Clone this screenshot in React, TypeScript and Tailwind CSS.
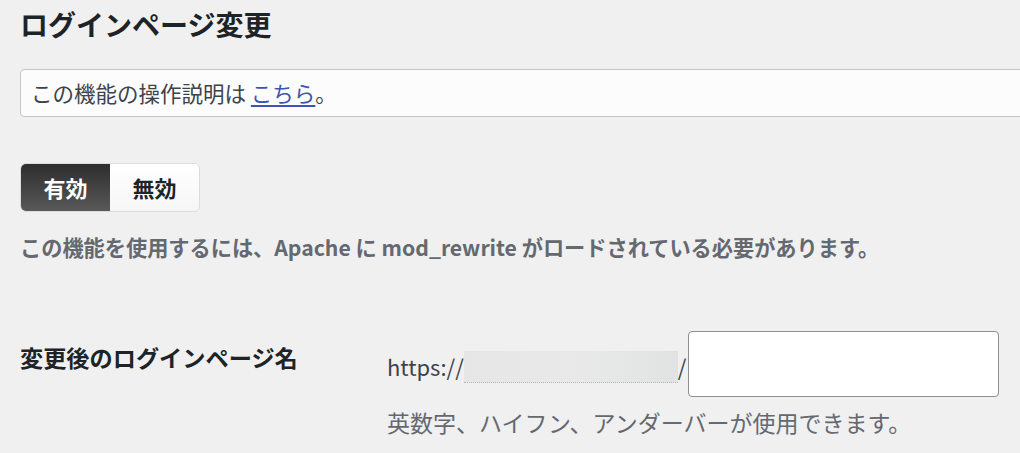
import { useState } from "react";

// 有効 / 無効 の切り替えボタン
function Toggle() {
  const [enabled, setEnabled] = useState(true);
  const on = "bg-gradient-to-b from-[#2e2e2e] to-[#595959] text-white";
  const off = "bg-gradient-to-b from-white to-[#f6f6f6] text-[#1d2327]";
  return (
    <div className="mt-[46px] inline-flex h-[49px] rounded-[6px] border border-[#dcdcde] overflow-hidden">
      <button
        onClick={() => setEnabled(true)}
        className={`w-[89px] text-[22px] font-bold ${enabled ? on : off}`}
      >
        有効
      </button>
      <button
        onClick={() => setEnabled(false)}
        className={`w-[89px] text-[22px] font-bold ${!enabled ? on : off}`}
      >
        無効
      </button>
    </div>
  );
}

export default function App() {
  const [slug, setSlug] = useState("");

  return (
    <div
      className="min-h-[453px] bg-[#f0f0f1] pl-[20px] pt-[4px] overflow-hidden"
      style={{ fontFamily: '"Noto Sans CJK JP", "Noto Sans", sans-serif' }}
    >
      <h2 className="text-[28px] font-bold leading-[40px] text-[#1d2327]">ログインページ変更</h2>

      {/* 説明ページへの案内 */}
      <div className="mt-[25px] h-[48px] -mr-[10px] flex items-center rounded-l-[4px] border border-[#c3c4c7] bg-[#fcfcfc] pl-[10px]">
        <p className="text-[21.5px] text-[#3c434a]">
          この機能の操作説明は{" "}
          <a href="#" className="text-[#3b56b0] underline underline-offset-[3px]">
            こちら
          </a>
          。
        </p>
      </div>

      <Toggle />

      <p className="mt-[19px] text-[21.2px] leading-[32px] font-bold text-[#646970]">
        この機能を使用するには、Apache に mod_rewrite がロードされている必要があります。
      </p>

      {/* ログインページ名の設定 */}
      <div className="mt-[68px] flex">
        <div className="w-[367px] pt-[10px] text-[23.2px] leading-[32px] font-bold text-[#1d2327]">
          変更後のログインページ名
        </div>
        <div>
          <div className="flex items-center text-[22px] text-[#3c434a]">
            <span className="pt-[4px]">https://</span>
            <span className="mt-[6px] h-[32px] w-[214px] bg-gradient-to-r from-[#e6e6e6] via-[#e9e9e9] to-[#e1e3e3] blur-[0.5px] border-b border-dotted border-[#b8b8b8]" />
            <span className="pt-[4px]">/</span>
            <input
              value={slug}
              onChange={(e) => setSlug(e.target.value)}
              className="ml-[2px] h-[66px] w-[311px] rounded-[4px] border border-[#8c8f94] bg-white px-[8px] outline-none"
            />
          </div>
          <p className="mt-[9px] text-[23px] leading-[32px] text-[#646970]">
            英数字、ハイフン、アンダーバーが使用できます。
          </p>
        </div>
      </div>
    </div>
  );
}
